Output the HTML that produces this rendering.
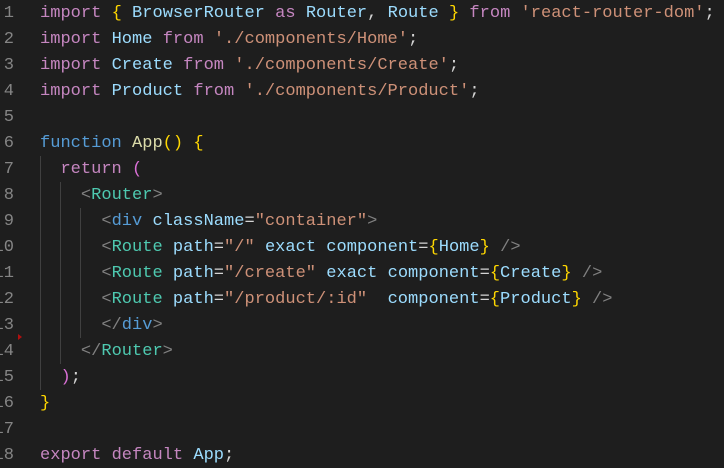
<!DOCTYPE html>
<html><head><style>
body{margin:0;background:#1e1e1e;width:724px;height:467px;overflow:hidden;position:relative}
.l{position:absolute;left:0;width:724px;overflow:hidden;height:26px;line-height:28px;font-family:"Liberation Mono",monospace;font-size:17.05px;white-space:pre;color:#d4d4d4}
.n{position:absolute;left:-20px;width:34px;color:#858585;text-align:right}
.c{position:absolute;left:40px}
.k{color:#c586c0}.v{color:#9cdcfe}.y{color:#ffd700}.s{color:#ce9178}.b{color:#569cd6}.f{color:#dcdcaa}.g{color:#808080}.t{color:#4ec9b0}.p{color:#da70d6}
.guide{position:absolute;width:1px;background:#404040}
</style></head><body>
<div class="guide" style="left:40px;top:156px;height:234px"></div>
<div class="guide" style="left:60px;top:182px;height:182px"></div>
<div class="guide" style="left:80px;top:208px;height:130px"></div>
<div style="position:absolute;left:18px;top:334px;width:0;height:0;border-top:3px solid transparent;border-bottom:3px solid transparent;border-left:4px solid #b01010"></div>
<div class="l" style="top:0"><span class="n">1</span><span class="c"><span class="k">import</span> <span class="y">{</span> <span class="v">BrowserRouter</span> <span class="k">as</span> <span class="v">Router</span>, <span class="v">Route</span> <span class="y">}</span> <span class="k">from</span> <span class="s">'react-router-dom'</span>;</span></div>
<div class="l" style="top:26px"><span class="n">2</span><span class="c"><span class="k">import</span> <span class="v">Home</span> <span class="k">from</span> <span class="s">'./components/Home'</span>;</span></div>
<div class="l" style="top:52px"><span class="n">3</span><span class="c"><span class="k">import</span> <span class="v">Create</span> <span class="k">from</span> <span class="s">'./components/Create'</span>;</span></div>
<div class="l" style="top:78px"><span class="n">4</span><span class="c"><span class="k">import</span> <span class="v">Product</span> <span class="k">from</span> <span class="s">'./components/Product'</span>;</span></div>
<div class="l" style="top:104px"><span class="n">5</span></div>
<div class="l" style="top:130px"><span class="n">6</span><span class="c"><span class="b">function</span> <span class="f">App</span><span class="y">()</span> <span class="y">{</span></span></div>
<div class="l" style="top:156px"><span class="n">7</span><span class="c">  <span class="k">return</span> <span class="p">(</span></span></div>
<div class="l" style="top:182px"><span class="n">8</span><span class="c">    <span class="g">&lt;</span><span class="t">Router</span><span class="g">&gt;</span></span></div>
<div class="l" style="top:208px"><span class="n">9</span><span class="c">      <span class="g">&lt;</span><span class="b">div</span> <span class="v">className</span>=<span class="s">"container"</span><span class="g">&gt;</span></span></div>
<div class="l" style="top:234px"><span class="n">10</span><span class="c">      <span class="g">&lt;</span><span class="t">Route</span> <span class="v">path</span>=<span class="s">"/"</span> <span class="v">exact</span> <span class="v">component</span>=<span class="y">{</span><span class="v">Home</span><span class="y">}</span> <span class="g">/&gt;</span></span></div>
<div class="l" style="top:260px"><span class="n">11</span><span class="c">      <span class="g">&lt;</span><span class="t">Route</span> <span class="v">path</span>=<span class="s">"/create"</span> <span class="v">exact</span> <span class="v">component</span>=<span class="y">{</span><span class="v">Create</span><span class="y">}</span> <span class="g">/&gt;</span></span></div>
<div class="l" style="top:286px"><span class="n">12</span><span class="c">      <span class="g">&lt;</span><span class="t">Route</span> <span class="v">path</span>=<span class="s">"/product/:id"</span>  <span class="v">component</span>=<span class="y">{</span><span class="v">Product</span><span class="y">}</span> <span class="g">/&gt;</span></span></div>
<div class="l" style="top:312px"><span class="n">13</span><span class="c">      <span class="g">&lt;/</span><span class="b">div</span><span class="g">&gt;</span></span></div>
<div class="l" style="top:338px"><span class="n">14</span><span class="c">    <span class="g">&lt;/</span><span class="t">Router</span><span class="g">&gt;</span></span></div>
<div class="l" style="top:364px"><span class="n">15</span><span class="c">  <span class="p">)</span>;</span></div>
<div class="l" style="top:390px"><span class="n">16</span><span class="c"><span class="y">}</span></span></div>
<div class="l" style="top:416px"><span class="n">17</span></div>
<div class="l" style="top:442px"><span class="n">18</span><span class="c"><span class="k">export</span> <span class="k">default</span> <span class="v">App</span>;</span></div>
</body></html>
